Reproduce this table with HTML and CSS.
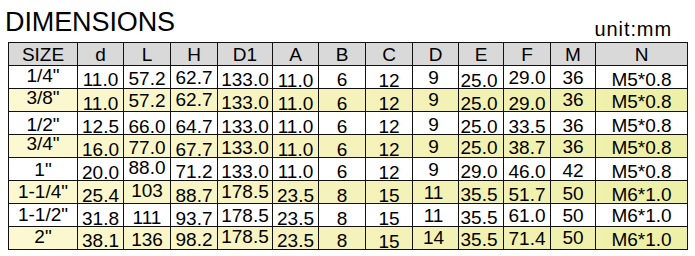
FILE: index.html
```html
<!DOCTYPE html>
<html lang="en">
<head>
<meta charset="utf-8">
<title>Dimensions</title>
<link rel="stylesheet" href="styles.css">
</head>
<body>
<div class="sheet">
  <div class="head">
    <h1 class="title">DIMENSIONS</h1>
    <span class="unit">unit:mm</span>
  </div>
  <div class="table">
    <div class="row hdr">
      <span class="c o6">SIZE</span><span class="c o6">d</span><span class="c o6">L</span><span class="c o6">H</span><span class="c o6">D1</span><span class="c o6">A</span><span class="c o6">B</span><span class="c o6">C</span><span class="c o6">D</span><span class="c o6">E</span><span class="c o6">F</span><span class="c o6">M</span><span class="c o6">N</span>
    </div>
    <div class="row">
      <span class="c o4">1/4&quot;</span><span class="c o8">11.0</span><span class="c o7">57.2</span><span class="c o6">62.7</span><span class="c o8">133.0</span><span class="c o9">11.0</span><span class="c o8">6</span><span class="c o9">12</span><span class="c o6 ls">9</span><span class="c o9 ls">25.0</span><span class="c o6">29.0</span><span class="c o6">36</span><span class="c o8">M5*0.8</span>
    </div>
    <div class="row alt">
      <span class="c o3">3/8&quot;</span><span class="c o9">11.0</span><span class="c o6">57.2</span><span class="c o5">62.7</span><span class="c o8">133.0</span><span class="c o9">11.0</span><span class="c o9">6</span><span class="c o9">12</span><span class="c o5 ls">9</span><span class="c o9 ls">25.0</span><span class="c o9">29.0</span><span class="c o5">36</span><span class="c o7">M5*0.8</span>
    </div>
    <div class="row">
      <span class="c o7">1/2&quot;</span><span class="c o9">12.5</span><span class="c o9">66.0</span><span class="c o9">64.7</span><span class="c o9">133.0</span><span class="c o9">11.0</span><span class="c o9">6</span><span class="c o9">12</span><span class="c o7 ls">9</span><span class="c o9 ls">25.0</span><span class="c o9">33.5</span><span class="c o8">36</span><span class="c o8">M5*0.8</span>
    </div>
    <div class="row alt">
      <span class="c o3">3/4&quot;</span><span class="c o9">16.0</span><span class="c o7">77.0</span><span class="c o9">67.7</span><span class="c o7">133.0</span><span class="c o9">11.0</span><span class="c o9">6</span><span class="c o9">12</span><span class="c o6 ls">9</span><span class="c o7 ls">25.0</span><span class="c o7">38.7</span><span class="c o6">36</span><span class="c o7">M5*0.8</span>
    </div>
    <div class="row">
      <span class="c o6">1&quot;</span><span class="c o9">20.0</span><span class="c o4">88.0</span><span class="c o8">71.2</span><span class="c o8">133.0</span><span class="c o8">11.0</span><span class="c o8">6</span><span class="c o9">12</span><span class="c o6 ls">9</span><span class="c o8 ls">29.0</span><span class="c o8">46.0</span><span class="c o7">42</span><span class="c o8">M5*0.8</span>
    </div>
    <div class="row alt">
      <span class="c o5">1-1/4&quot;</span><span class="c o9">25.4</span><span class="c o4">103</span><span class="c o9">88.7</span><span class="c o5">178.5</span><span class="c o9">23.5</span><span class="c o9">8</span><span class="c o9">15</span><span class="c o6 ls">11</span><span class="c o8 ls">35.5</span><span class="c o8">51.7</span><span class="c o7">50</span><span class="c o8">M6*1.0</span>
    </div>
    <div class="row">
      <span class="c o5">1-1/2&quot;</span><span class="c o9">31.8</span><span class="c o8">111</span><span class="c o9">93.7</span><span class="c o6">178.5</span><span class="c o9">23.5</span><span class="c o9">8</span><span class="c o9">15</span><span class="c o6 ls">11</span><span class="c o8 ls">35.5</span><span class="c o6">61.0</span><span class="c o6">50</span><span class="c o6">M6*1.0</span>
    </div>
    <div class="row alt">
      <span class="c o4">2&quot;</span><span class="c o8">38.1</span><span class="c o7">136</span><span class="c o7">98.2</span><span class="c o4">178.5</span><span class="c o8">23.5</span><span class="c o8">8</span><span class="c o9">15</span><span class="c o5 ls">14</span><span class="c o7 ls">35.5</span><span class="c o6">71.4</span><span class="c o5">50</span><span class="c o7">M6*1.0</span>
    </div>
  </div>
</div>
</body>
</html>
```

FILE: styles.css
```css
* {
  box-sizing: border-box;
}

html, body {
  margin: 0;
  padding: 0;
  background: #ffffff;
}

body {
  font-family: "Liberation Sans", Arial, sans-serif;
  color: #000000;
}

.sheet {
  width: 688px;
  padding: 8px 0 0 8px;
}

.head {
  display: flex;
  justify-content: space-between;
  align-items: flex-end;
  height: 34px;
}

.title {
  margin: 0 0 6px -3px;
  font-size: 27px;
  line-height: 27px;
  font-weight: normal;
  letter-spacing: -0.1px;
  color: #000000;
}

.unit {
  margin: 0 16px 3px 0;
  font-size: 20px;
  line-height: 20px;
  letter-spacing: 0.9px;
  color: #000000;
}

.table {
  display: flex;
  flex-direction: column;
  width: 680px;
  border-left: 1px solid #111111;
  border-top: 1px solid #111111;
}

.row {
  display: grid;
  grid-template-columns: 69px 46px 47px 47px 55px 46px 47px 47px 46px 45px 47px 45px 92px;
  height: 23px;
  border-bottom: 1px solid #111111;
  background: #ffffff;
}

.row.hdr {
  background: #d9d9d9;
}

.row.alt {
  background: linear-gradient(90deg, #fcf9d2 0%, #f6f2bd 45%, #edf0a6 100%);
}

.c {
  display: block;
  border-right: 1px solid #111111;
  font-size: 19px;
  line-height: 13px;
  text-align: center;
  white-space: nowrap;
  overflow: visible;
}

.c.ls {
  padding-right: 4px;
}

.o2 { padding-top: 1px; }
.o3 { padding-top: 2px; }
.o4 { padding-top: 3px; }
.o5 { padding-top: 4px; }
.o6 { padding-top: 5px; }
.o7 { padding-top: 6px; }
.o8 { padding-top: 7px; }
.o9 { padding-top: 8px; }
```
